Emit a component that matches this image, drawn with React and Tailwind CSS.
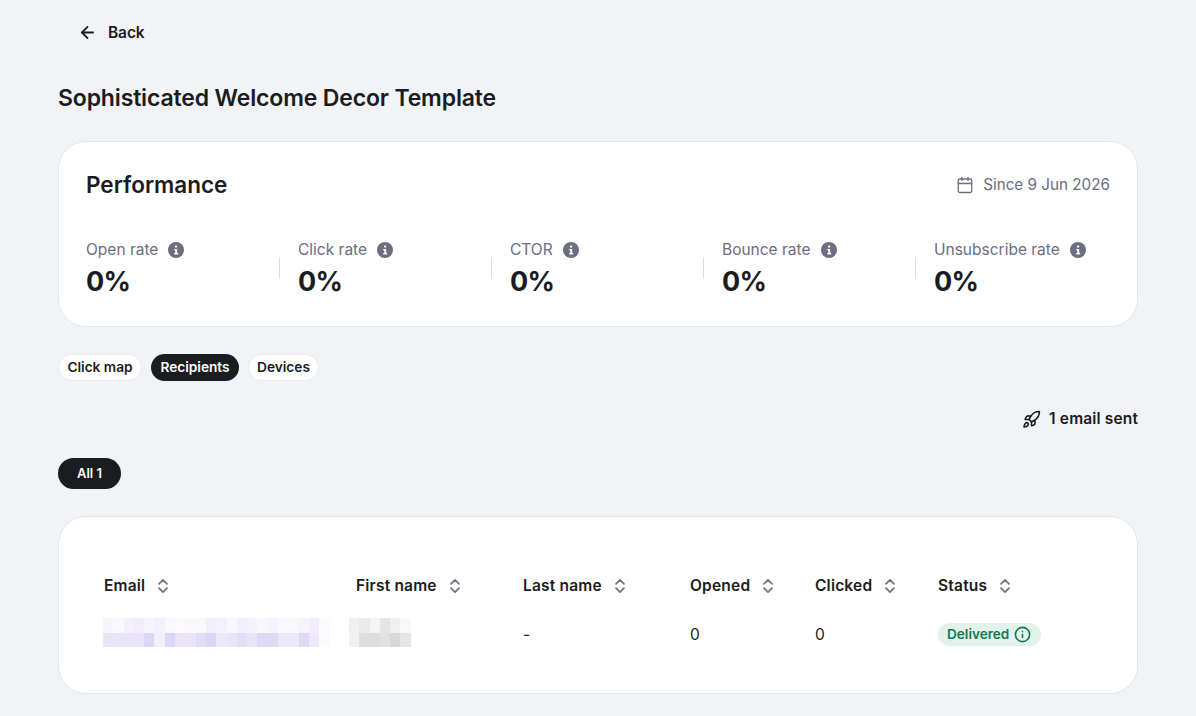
import React from 'react';
import { ArrowLeft, Calendar, Rocket, Info } from 'lucide-react';

const metrics = ['Open rate', 'Click rate', 'CTOR', 'Bounce rate', 'Unsubscribe rate'];

const columns = [
  { label: 'Email', width: 'w-[252px]' },
  { label: 'First name', width: 'w-[167px]' },
  { label: 'Last name', width: 'w-[167px]' },
  { label: 'Opened', width: 'w-[125px]' },
  { label: 'Clicked', width: 'w-[123px]' },
  { label: 'Status', width: 'w-[120px]' },
];

const emailTop = ['#f6f4fd', '#f9f8fe', '#f3f0fb', '#f0ecfa', '#f7f5fd', '#f3f0fb', '#f9f8fe', '#faf9fe', '#f8f7fd', '#f9f8fe', '#f1effa', '#f3f1fc', '#f9f8fe', '#f3f0fb', '#f5f3fc', '#f9f8fe', '#f5f3fd', '#f9f8fe', '#f9f8fe', '#f6f3fc', '#f1edfa', '#fcfcff'];
const emailBottom = ['#e8e4f8', '#e9e5f8', '#e9e5f8', '#ebe3f7', '#dcd7f6', '#f1effb', '#dcd7f6', '#ebe4f7', '#ebe4f7', '#e3dcf6', '#dcd5f4', '#ebe8fa', '#e9e5f9', '#e3def7', '#e9e5f9', '#dfd9f6', '#dfd9f6', '#ece8fa', '#ece8fa', '#dfd9f6', '#ece8fa', '#fafaff'];
const nameTop = ['#f1f0f1', '#e9eaea', '#f4f4f2', '#e4e4e4', '#f0f0f0', '#f8f8f8'];
const nameBottom = ['#f1f1f1', '#dededd', '#dedede', '#e2e2e2', '#d9d8d6', '#e3e5e6'];

function InfoDot() {
  return (
    <svg width="16" height="16" viewBox="0 0 16 16" className="shrink-0">
      <circle cx="8" cy="8" r="8" fill="#6b6d80" />
      <rect x="7" y="3.6" width="2.2" height="2" rx="0.6" fill="#fff" />
      <path d="M6.2 7h3v4h1v1.4H6.2V11h1V8.3h-1z" fill="#fff" />
    </svg>
  );
}

function SortIcon() {
  return (
    <svg width="12" height="16" viewBox="0 0 12 16" fill="none" stroke="#6f7082" strokeWidth="1.7" strokeLinecap="round" strokeLinejoin="round" className="shrink-0">
      <path d="M2 5.8 6 1.8l4 4" />
      <path d="M2 10.2l4 4 4-4" />
    </svg>
  );
}

function Mosaic({ top, bottom, cell }) {
  return (
    <div>
      {[top, bottom].map((row, i) => (
        <div key={i} className={i === 0 ? 'flex h-[15px]' : 'flex h-[14px]'}>
          {row.map((c, j) => (
            <div key={j} className={cell} style={{ backgroundColor: c }} />
          ))}
        </div>
      ))}
    </div>
  );
}

export default function App() {
  return (
    <div className="min-h-[716px] bg-[#f2f3f7] px-[58px] pt-[22px] text-[#1b1c20] font-['Inter',sans-serif] overflow-hidden">
      <div className="flex items-center h-[23px] pl-[20px] gap-[11px] text-[15.5px] font-semibold tracking-[-0.1px]">
        <ArrowLeft size={19} strokeWidth={2.3} className="-mt-[2px]" />
        <span className="-mt-[2px]">Back</span>
      </div>

      <h1 className="mt-[39px] h-[29px] leading-[29px] text-[23px] font-semibold tracking-[-0.15px]">
        Sophisticated Welcome Decor Template
      </h1>

      <section className="mt-[28px] h-[186px] rounded-[28px] bg-white border border-[#e4e5ea] px-[27px] pt-[28px]">
        <div className="flex items-center justify-between h-[30px]">
          <h2 className="text-[22.5px] font-semibold">Performance</h2>
          <div className="flex items-center gap-[9px] text-[15.25px] text-[#6b6d80]">
            <Calendar size={18} strokeWidth={1.7} />
            <span>Since 9 Jun 2026</span>
          </div>
        </div>
        <div className="flex mt-[40px]">
          {metrics.map((m, i) => (
            <div key={m} className="relative w-[212px] shrink-0">
              <div className="flex items-center gap-[10px] h-[20px] text-[15.5px] text-[#6b6d80]">
                <span>{m}</span>
                <InfoDot />
              </div>
              <div className="mt-[5px] h-[34px] leading-[34px] text-[27px] font-bold tracking-[-0.7px]">0%</div>
              {i < 4 && <div className="absolute left-[193px] top-[17px] w-px h-[22px] bg-[#dcdde2]" />}
            </div>
          ))}
        </div>
      </section>

      <div className="flex gap-[9px] mt-[27px] text-[13.7px] font-semibold">
        <button className="h-[27px] w-[84px] rounded-full bg-white border border-[#e9eaee]">Click map</button>
        <button className="h-[27px] w-[88px] rounded-full bg-[#1b1c20] text-white">Recipients</button>
        <button className="h-[27px] w-[71px] rounded-full bg-white border border-[#e9eaee]">Devices</button>
      </div>

      <div className="flex justify-end items-center gap-[8px] mt-[28px] h-[20px] text-[15.5px] font-semibold tracking-[0.15px]">
        <Rocket size={19} strokeWidth={2} />
        <span>1 email sent</span>
      </div>

      <button className="block mt-[29px] h-[31px] w-[63px] rounded-full bg-[#1b1c20] text-white text-[13px] font-semibold">
        All 1
      </button>

      <section className="mt-[27px] h-[178px] rounded-[28px] bg-white border border-[#e4e5ea] pl-[45px] pt-[57px]">
        <div className="flex h-[24px] items-center text-[15.5px] font-semibold tracking-[0.2px]">
          {columns.map((c) => (
            <div key={c.label} className={`${c.width} flex items-center gap-[12px]`}>
              <span>{c.label}</span>
              <SortIcon />
            </div>
          ))}
        </div>
        <div className="flex mt-[20px] h-[29px] items-center text-[15.5px]">
          <div className="w-[252px] -ml-[1px]">
            <Mosaic top={emailTop} bottom={emailBottom} cell="w-[10.3px]" />
          </div>
          <div className="w-[168px] -ml-[6px] pr-[6px]">
            <Mosaic top={nameTop} bottom={nameBottom} cell="w-[10.3px]" />
          </div>
          <div className="w-[167px] ml-[6px] mt-[4px]">-</div>
          <div className="w-[125px] mt-[4px]">0</div>
          <div className="w-[123px] mt-[4px]">0</div>
          <div className="flex items-center gap-[5px] h-[23px] mt-[4px] pl-[9px] pr-[10px] rounded-full bg-[#e3f3ec] text-[#0f7b54] text-[13.6px] font-semibold">
            <span>Delivered</span>
            <Info size={17} strokeWidth={2.3} />
          </div>
        </div>
      </section>
    </div>
  );
}
